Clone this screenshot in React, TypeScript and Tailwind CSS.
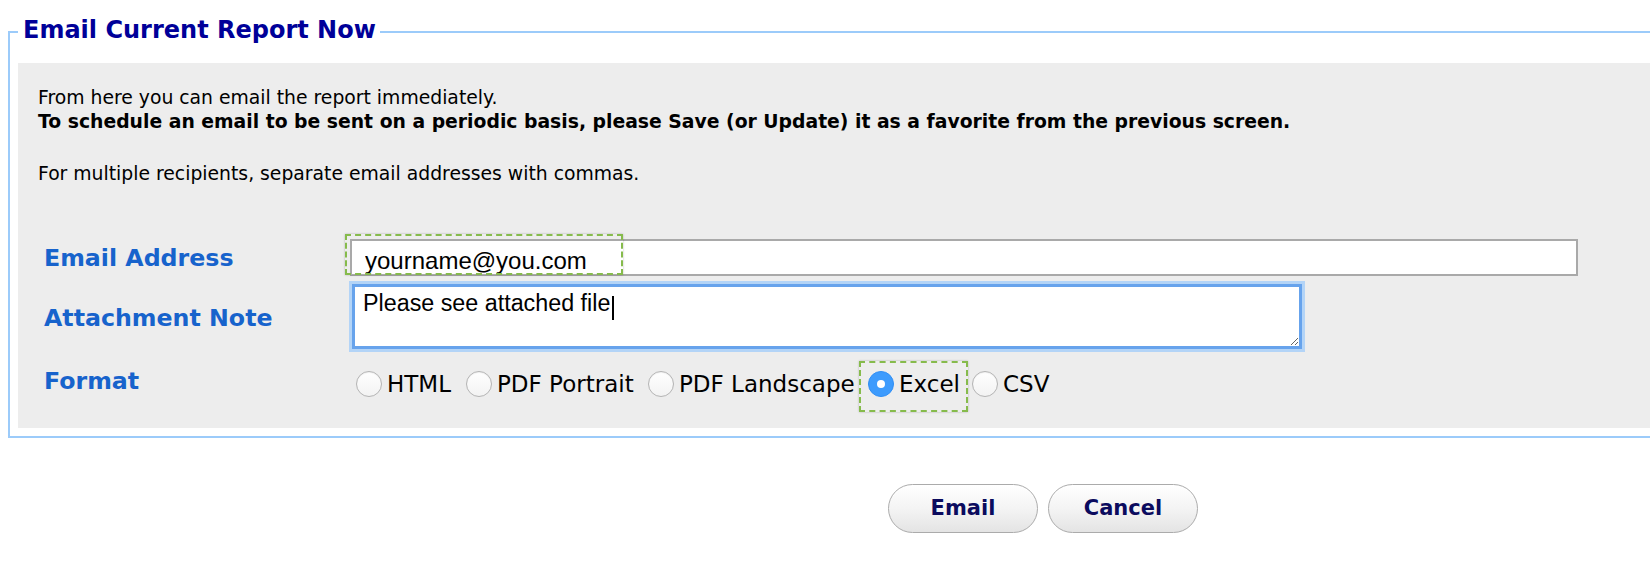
import React from "react";

function Radio({ checked }: { checked?: boolean }) {
  if (checked) {
    return (
      <span className="flex h-[26px] w-[26px] shrink-0 items-center justify-center rounded-full border border-[#2f8ef5] bg-[#3d9bfd]">
        <span className="h-[8px] w-[8px] rounded-full bg-white" />
      </span>
    );
  }
  return (
    <span className="h-[26px] w-[26px] shrink-0 rounded-full border border-[#b4b4b4] bg-linear-to-b from-white to-[#f3f3f3] shadow-[inset_0_1px_1px_rgba(0,0,0,0.06)]" />
  );
}

function Option({ label, checked, w }: { label: string; checked?: boolean; w: string }) {
  return (
    <label className={`flex items-center gap-[5px] ${w}`}>
      <Radio checked={checked} />
      <span className="whitespace-nowrap">{label}</span>
    </label>
  );
}

export default function App() {
  return (
    <div
      className="relative h-[570px] w-[1650px] overflow-hidden bg-white text-black"
      style={{ fontFamily: '"DejaVu Sans", Verdana, sans-serif' }}
    >
      <fieldset className="ml-2 mt-[15px] w-[1700px] border-2 border-[#9ccbfa] px-2 pb-2 pt-[15px]">
        <legend className="pb-[3px] pl-[5px] pr-[4px] text-[24px] font-bold leading-[30px] text-[#000099]">
          Email Current Report Now
        </legend>
        <div className="bg-[#ededed] pb-[29px] pl-5 pt-[23px]">
          <div className="text-[18.8px] leading-6">
            <p>From here you can email the report immediately.</p>
            <p className="font-bold">
              To schedule an email to be sent on a periodic basis, please Save (or Update) it as a favorite from the previous screen.
            </p>
            <p className="mt-[28px]">For multiple recipients, separate email addresses with commas.</p>
          </div>

          <div className="ml-[6px] mt-[53px] flex flex-col">
            <div className="flex h-[37px] items-center">
              <div className="w-[306px] pt-[2px] text-[23.7px] font-bold text-[#1763cc]">Email Address</div>
              <input
                type="text"
                defaultValue="yourname@you.com"
                className="box-border h-[37px] w-[1228px] border-2 border-[#a9a9a9] bg-white pl-[13px] pt-[7px] text-[24px] leading-[26px] outline-none"
                style={{ fontFamily: '"Liberation Sans", Arial, sans-serif' }}
              />
            </div>
            <div className="mt-2 flex h-[65px] items-center">
              <div className="w-[306px] pt-[4px] text-[23.7px] font-bold text-[#1763cc]">Attachment Note</div>
              <textarea
                defaultValue="Please see attached file"
                className="ml-[2px] box-border h-[65px] w-[950px] resize border-[3px] border-[#67a3ec] bg-white pl-[8px] pt-[3px] text-[23.3px] leading-[26px] shadow-[0_0_0_3px_#b3d4f7] outline-none"
                style={{ fontFamily: '"Liberation Sans", Arial, sans-serif' }}
              />
            </div>
            <div className="mt-[20px] flex h-[30px] items-center">
              <div className="w-[306px] pb-[4px] text-[23.7px] font-bold text-[#1763cc]">Format</div>
              <div className="ml-[6px] flex items-center text-[23px]">
                <Option label="HTML" w="w-[110px]" />
                <Option label="PDF Portrait" w="w-[182px]" />
                <Option label="PDF Landscape" w="w-[220px]" />
                <Option label="Excel" checked w="w-[104px]" />
                <Option label="CSV" w="w-[80px]" />
              </div>
            </div>
          </div>
        </div>
      </fieldset>

      <div className="ml-[888px] mt-[46px] flex gap-[10px]">
        <button className="h-[49px] w-[150px] rounded-full border border-[#ababab] bg-linear-to-b from-white via-[#f4f4f4] to-[#e4e4e4] text-[21px] font-bold text-[#0b0b5e] shadow-[inset_0_1px_0_white]">
          Email
        </button>
        <button className="h-[49px] w-[150px] rounded-full border border-[#ababab] bg-linear-to-b from-white via-[#f4f4f4] to-[#e4e4e4] text-[21px] font-bold text-[#0b0b5e] shadow-[inset_0_1px_0_white]">
          Cancel
        </button>
      </div>

      {/* annotation highlight boxes */}
      <div className="pointer-events-none absolute left-[345px] top-[234px] h-[41px] w-[278px] border-2 border-dashed border-[#86bb4c] shadow-[0_0_2px_rgba(0,0,0,0.25)]" />
      <div className="pointer-events-none absolute left-[859px] top-[361px] h-[51px] w-[109px] border-2 border-dashed border-[#86bb4c] shadow-[0_0_2px_rgba(0,0,0,0.25)]" />
      {/* caret */}
      <div className="pointer-events-none absolute left-[612px] top-[296px] h-[24px] w-[2px] bg-black" />
    </div>
  );
}
